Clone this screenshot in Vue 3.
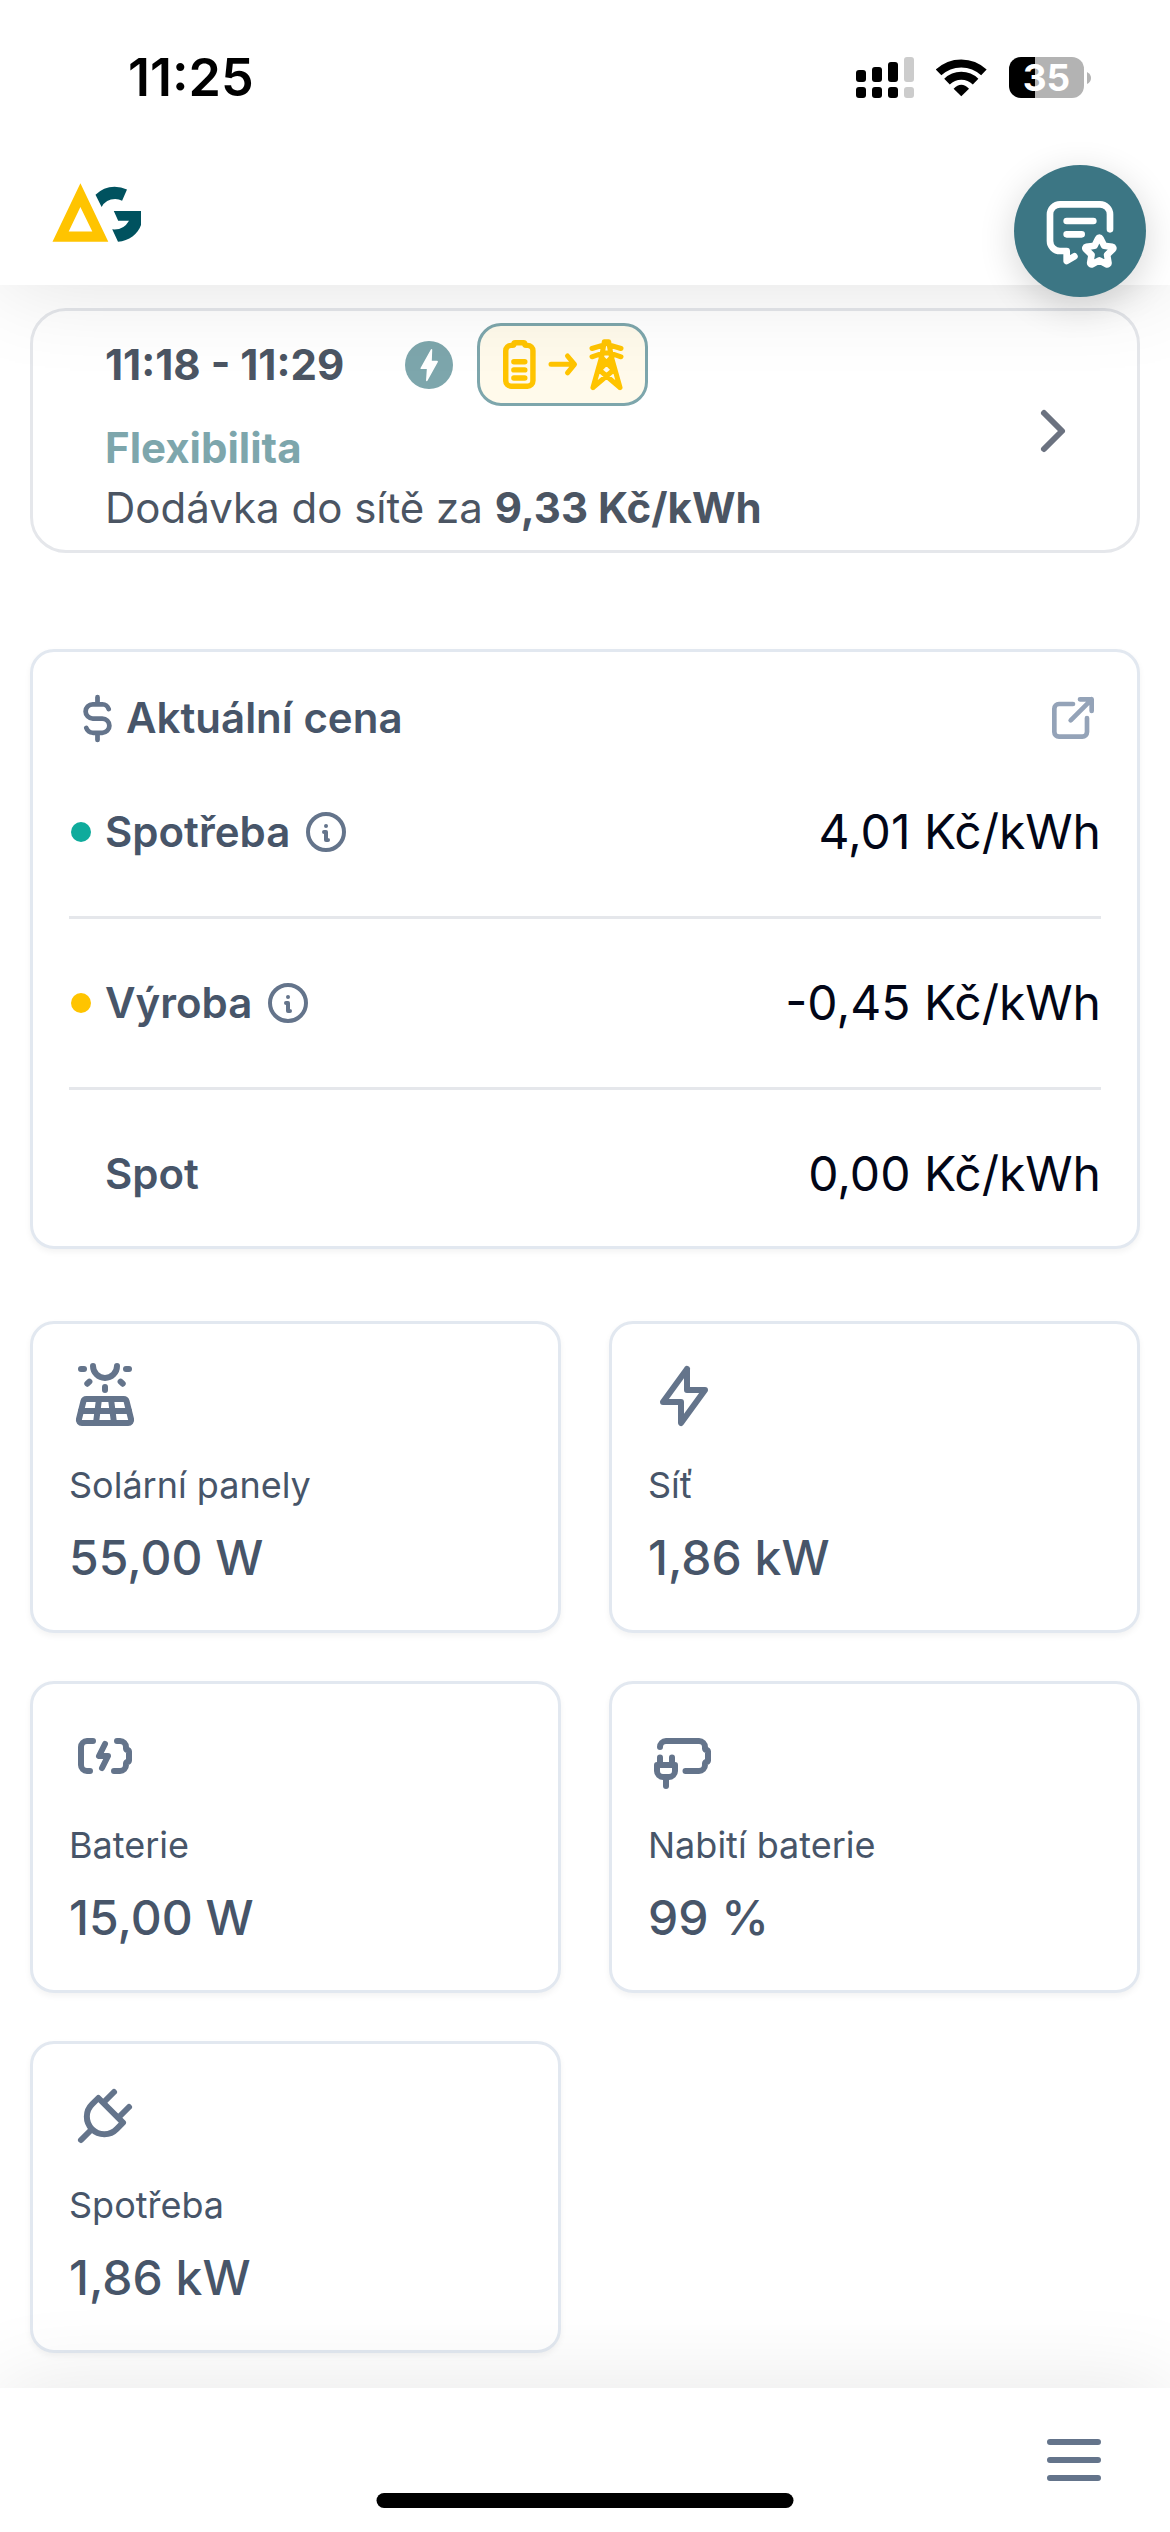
<script setup>
const prices = [
  { label: 'Spotřeba', value: '4,01 Kč/kWh', tone: 'teal', info: true },
  { label: 'Výroba', value: '-0,45 Kč/kWh', tone: 'amber', info: true },
  { label: 'Spot', value: '0,00 Kč/kWh', tone: 'none', info: false },
]

const tiles = [
  {
    label: 'Solární panely',
    value: '55,00 W',
    paths: [
      'M8 2a4 4 0 1 0 8 0',
      'M4 3h1',
      'M19 3h1',
      'M12 9v1',
      'M17.2 7.2l.707 .707',
      'M6.8 7.2l-.7 .7',
      'M4.28 21h15.44a1 1 0 0 0 .97 -1.243l-1.5 -6a1 1 0 0 0 -.97 -.757h-12.44a1 1 0 0 0 -.97 .757l-1.5 6a1 1 0 0 0 .97 1.243z',
      'M4 17h16',
      'M10 13l-1 8',
      'M14 13l1 8',
    ],
  },
  {
    label: 'Síť',
    value: '1,86 kW',
    paths: ['M13 3l0 7l6 0l-8 11l0 -7l-6 0l8 -11'],
  },
  {
    label: 'Baterie',
    value: '15,00 W',
    paths: [
      'M16 7h1a2 2 0 0 1 2 2v.5a.5 .5 0 0 0 .5 .5a.5 .5 0 0 1 .5 .5v3a.5 .5 0 0 1 -.5 .5a.5 .5 0 0 0 -.5 .5v.5a2 2 0 0 1 -2 2h-2',
      'M8 7h-2a2 2 0 0 0 -2 2v6a2 2 0 0 0 2 2h1',
      'M12 8l-2 4h3l-2 4',
    ],
  },
  {
    label: 'Nabití baterie',
    value: '99 %',
    paths: [
      'M4 9a2 2 0 0 1 2 -2h11a2 2 0 0 1 2 2v.5a.5 .5 0 0 0 .5 .5a.5 .5 0 0 1 .5 .5v3a.5 .5 0 0 1 -.5 .5a.5 .5 0 0 0 -.5 .5v.5a2 2 0 0 1 -2 2h-4.5',
      'M3 15h6v2a2 2 0 0 1 -2 2h-2a2 2 0 0 1 -2 -2v-2z',
      'M6 22v-3',
      'M4 15v-2.5',
      'M8 15v-2.5',
    ],
  },
  {
    label: 'Spotřeba',
    value: '1,86 kW',
    paths: [
      'M9.785 6l8.215 8.215l-2.054 2.054a5.81 5.81 0 1 1 -8.215 -8.215l2.054 -2.054z',
      'M4 20l3.5 -3.5',
      'M15 4l-3.5 3.5',
      'M20 9l-3.5 3.5',
    ],
  },
]
</script>

<template>
  <div class="page">
    <header class="top">
      <div class="status">
        <span class="clock">11:25</span>
        <div class="indicators">
          <svg width="58" height="41" viewBox="0 0 58 41" aria-hidden="true">
            <rect x="0" y="13" width="10" height="12" rx="3" />
            <rect x="16" y="10" width="10" height="15" rx="3" />
            <rect x="32" y="5" width="10" height="20" rx="3" />
            <rect x="48" y="0" width="10" height="25" rx="3" fill="#cccccc" />
            <rect x="0" y="30" width="10" height="11" rx="3" />
            <rect x="16" y="30" width="10" height="11" rx="3" />
            <rect x="32" y="30" width="10" height="11" rx="3" />
            <rect x="48" y="30" width="10" height="11" rx="3" fill="#cccccc" />
          </svg>
          <svg class="wifi" width="51" height="41" viewBox="0 -2 51 41" aria-hidden="true">
            <path d="M2.6 13.4A33 33 0 0 1 47.9 13.4M11 22.6A20.5 20.5 0 0 1 39.6 22.6" fill="none" stroke="#000" stroke-width="8" />
            <path d="M25.3 37.3L17.6 29.8Q25.3 21.5 33 29.8Z" />
          </svg>
          <span class="battery">35</span>
          <svg width="4" height="12" viewBox="0 0 4 12" aria-hidden="true"><path d="M0 0Q4 2 4 6T0 12Z" fill="#b3b3b3" /></svg>
        </div>
      </div>
      <div class="brand">
        <svg width="90" height="60" viewBox="0 0 90 60" role="img" aria-label="AG">
          <path fill="#ffc400" fill-rule="evenodd" d="M28.4 .3L56.3 58.8H.5ZM28.4 24L16.7 48.5H40.3Z" />
          <path fill="#00525f" d="M43.5 11.8Q51.5 3.7 62.6 3.7Q69.2 3.8 75 6.6L70.1 17.8Q67 16.3 63.2 16.1Q54 16.3 49.6 24Z" />
          <path fill="#00525f" d="M61.8 28H89V42C86 51 77 58 66 58.8L60.2 46.3Q71.5 47.5 77 37.7H66.2Z" />
        </svg>
      </div>
      <button class="fab" type="button" aria-label="Zpětná vazba">
        <svg class="line-icon" width="80" height="80" viewBox="0 0 24 24" aria-hidden="true">
          <path d="M8 9h8M8 13h4.5" />
          <path d="M10.325 19.605l-2.325 1.395v-3h-2a3 3 0 0 1 -3 -3v-8a3 3 0 0 1 3 -3h12a3 3 0 0 1 3 3v4.5" />
          <path d="M17.8 20.817l-2.172 1.138a.392 .392 0 0 1 -.568 -.41l.415 -2.411l-1.757 -1.707a.389 .389 0 0 1 .217 -.665l2.428 -.352l1.086 -2.193a.392 .392 0 0 1 .702 0l1.086 2.193l2.428 .352a.39 .39 0 0 1 .217 .665l-1.757 1.707l.414 2.41a.39 .39 0 0 1 -.567 .411l-2.172 -1.138z" />
        </svg>
      </button>
    </header>

    <main class="content">
      <a class="event" href="#">
        <div class="event-body">
          <div class="event-head">
            <span class="event-time">11:18 - 11:29</span>
            <svg width="48" height="48" viewBox="0 0 48 48" aria-hidden="true">
              <circle cx="24" cy="24" r="24" fill="#7da6ac" />
              <path d="M26.5 8.8L16.2 27.3H22.6L21.8 39.5L32.2 20.6H26Z" fill="#fff" stroke="#fff" stroke-width="1.5" stroke-linejoin="round" />
            </svg>
            <span class="flow">
              <svg class="line-icon" width="165" height="77" viewBox="3 3 165 77" aria-hidden="true">
                <g transform="translate(9.7 8.8) scale(2.72)">
                  <path d="M7 18v-11a2 2 0 0 1 2 -2h.5a.5 .5 0 0 0 .5 -.5a.5 .5 0 0 1 .5 -.5h3a.5 .5 0 0 1 .5 .5a.5 .5 0 0 0 .5 .5h.5a2 2 0 0 1 2 2v11a2 2 0 0 1 -2 2h-6a2 2 0 0 1 -2 -2M10 17h4M10 14h4M10 11h4" />
                </g>
                <path stroke-width="5" d="M74 41.3H97M90.5 33L97.5 41.3L90.5 49.8" />
                <path stroke-width="5" d="M127.3 18.7H131.7L134.4 34L143 64.5M127.3 18.7L124.6 34L116 64.5M115 25.5L127 21.8M132 21.8L144 25.5M115 33.8L126 30H133L144 33.8M125 35L136.6 47L116 64.5M134 35L122.4 47L143 64.5" />
              </svg>
            </span>
          </div>
          <div class="event-kind">Flexibilita</div>
          <div class="event-text">Dodávka do sítě za <strong>9,33 Kč/kWh</strong></div>
        </div>
        <svg class="line-icon" width="72" height="72" viewBox="0 0 24 24" aria-hidden="true"><path d="M9 6l6 6l-6 6" /></svg>
      </a>

      <section class="card prices">
        <div class="prices-head">
          <svg class="line-icon" width="57" height="57" viewBox="0 0 24 24" aria-hidden="true">
            <path d="M16.7 8a3 3 0 0 0 -2.7 -2h-4a3 3 0 0 0 0 6h4a3 3 0 0 1 0 6h-4a3 3 0 0 1 -2.7 -2M12 3v3m0 12v3" />
          </svg>
          <h2>Aktuální cena</h2>
          <a class="open" href="#" aria-label="Otevřít detail ceny">
            <svg class="line-icon" width="56" height="56" viewBox="0 0 24 24" aria-hidden="true">
              <path d="M12 6h-6a2 2 0 0 0 -2 2v10a2 2 0 0 0 2 2h10a2 2 0 0 0 2 -2v-6M11 13l9 -9M15 4h5v5" />
            </svg>
          </a>
        </div>
        <div v-for="row in prices" :key="row.label" class="price">
          <span class="dot" :class="row.tone"></span>
          <span class="price-label">{{ row.label }}</span>
          <button v-if="row.info" class="info" type="button" :aria-label="'Informace: ' + row.label">
            <svg width="40" height="40" viewBox="0 0 40 40" fill="none" stroke="currentColor" stroke-width="4" stroke-linecap="round" stroke-linejoin="round" aria-hidden="true">
              <circle cx="20" cy="20" r="18" />
              <path d="M20 14h.01M18 20h2v8h2" />
            </svg>
          </button>
          <span class="price-value">{{ row.value }}</span>
        </div>
      </section>

      <section class="tiles">
        <article v-for="(tile, i) in tiles" :key="i" class="card tile">
          <svg class="line-icon" width="72" height="72" viewBox="0 0 24 24" aria-hidden="true">
            <path v-for="d in tile.paths" :key="d" :d="d" />
          </svg>
          <div class="tile-label">{{ tile.label }}</div>
          <div class="tile-value">{{ tile.value }}</div>
        </article>
      </section>
    </main>

    <nav class="bottom">
      <button class="menu" type="button" aria-label="Menu">
        <svg class="line-icon" width="72" height="72" viewBox="0 0 24 24" aria-hidden="true"><path d="M4 6h16M4 12h16M4 18h16" /></svg>
      </button>
      <span class="home"></span>
    </nav>
  </div>
</template>

<style>
body {
  margin: 0;
  background: #fff;
}
</style>

<style scoped>
.page {
  min-height: 100vh;
  display: flex;
  flex-direction: column;
  font-family: Inter, "Liberation Sans", sans-serif;
  font-size: 42px;
  line-height: 60px;
  color: #475569;
}

svg {
  display: block;
  flex: none;
}

button {
  padding: 0;
  border: 0;
  background: none;
  font: inherit;
  color: inherit;
  cursor: pointer;
}

a {
  color: inherit;
  text-decoration: none;
}

.line-icon {
  fill: none;
  stroke: currentColor;
  stroke-width: 2;
  stroke-linecap: round;
  stroke-linejoin: round;
}

.top {
  position: sticky;
  top: 0;
  z-index: 2;
  background: #fff;
  box-shadow: 0 0 90px rgba(0, 0, 0, 0.12);
}

.status {
  box-sizing: border-box;
  height: 141px;
  padding: 14px 79px 0 128px;
  display: flex;
  align-items: center;
  justify-content: space-between;
  color: #000;
}

.clock {
  font-size: 52px;
  font-weight: 600;
}

.indicators {
  display: flex;
  align-items: center;
}

.wifi {
  margin: 0 22px;
}

.battery {
  width: 75px;
  height: 41px;
  margin-right: 3px;
  border-radius: 12px;
  background: linear-gradient(90deg, #000 35%, #b3b3b3 35%);
  color: #fff;
  font-size: 37px;
  font-weight: 700;
  line-height: 41px;
  text-align: center;
}

.brand {
  height: 144px;
  padding: 0 52px;
  display: flex;
  align-items: center;
}

.fab {
  position: absolute;
  right: 24px;
  bottom: -12px;
  width: 132px;
  height: 132px;
  border-radius: 50%;
  display: flex;
  align-items: center;
  justify-content: center;
  background: #3c7684;
  color: #fff;
  box-shadow: 0 9px 36px rgba(0, 0, 0, 0.16);
}

.content {
  flex: 1;
  padding: 23px 30px 35px;
}

.event {
  margin-bottom: 96px;
  padding: 12px 48px 12px 72px;
  border: 3px solid #e5e7eb;
  border-radius: 36px;
  display: flex;
  align-items: center;
  justify-content: space-between;
  color: #4b5563;
}

.event > svg {
  color: #6b7280;
}

.event-head {
  margin-bottom: 12px;
  display: flex;
  align-items: center;
  gap: 24px;
}

.event-time {
  min-width: 276px;
  font-weight: 700;
}

.flow {
  border: 3px solid #7da6ac;
  border-radius: 24px;
  background: #fffaeb;
  color: #ffc400;
}

.event-kind {
  font-weight: 700;
  color: #7da6ac;
}

strong {
  font-weight: 700;
}

.card {
  border: 3px solid #e2e8f0;
  border-radius: 24px;
  background: #fff;
  box-shadow: 0 3px 6px rgba(0, 0, 0, 0.05);
}

.prices {
  margin-bottom: 72px;
  padding: 36px 36px 42px;
}

.prices-head {
  height: 60px;
  display: flex;
  align-items: center;
  color: #64748b;
}

h2 {
  flex: 1;
  margin: 0;
  font-size: 42px;
  font-weight: 600;
  color: #475569;
}

.open {
  color: #94a3b8;
}

.price {
  padding: 54px 0;
  display: flex;
  align-items: center;
  border-bottom: 3px solid #e5e7eb;
}

.price:last-child {
  padding-bottom: 0;
  border-bottom: 0;
}

.dot {
  width: 20px;
  height: 20px;
  margin: 0 14px 0 2px;
  border-radius: 50%;
}

.teal {
  background: #0fab9c;
}

.amber {
  background: #ffc400;
}

.price-label {
  font-weight: 600;
}

.info {
  margin-left: 16px;
  color: #64748b;
}

.price-value {
  margin-left: auto;
  font-size: 48px;
  color: #020617;
}

.tiles {
  display: grid;
  grid-template-columns: 1fr 1fr;
  gap: 48px;
}

.tile {
  padding: 36px;
}

.tile svg {
  color: #64748b;
}

.tile-label {
  margin: 26px 0 10px;
  font-size: 36px;
  line-height: 54px;
}

.tile-value {
  font-size: 48px;
  font-weight: 500;
  line-height: 72px;
}

.bottom {
  position: sticky;
  bottom: 0;
  z-index: 1;
  height: 144px;
  padding: 0 60px;
  display: flex;
  align-items: center;
  justify-content: flex-end;
  background: #fff;
  box-shadow: 0 0 90px rgba(0, 0, 0, 0.1);
}

.menu {
  color: #64748b;
}

.home {
  position: absolute;
  bottom: 24px;
  left: 50%;
  width: 417px;
  height: 15px;
  border-radius: 8px;
  background: #000;
  transform: translateX(-50%);
}
</style>
